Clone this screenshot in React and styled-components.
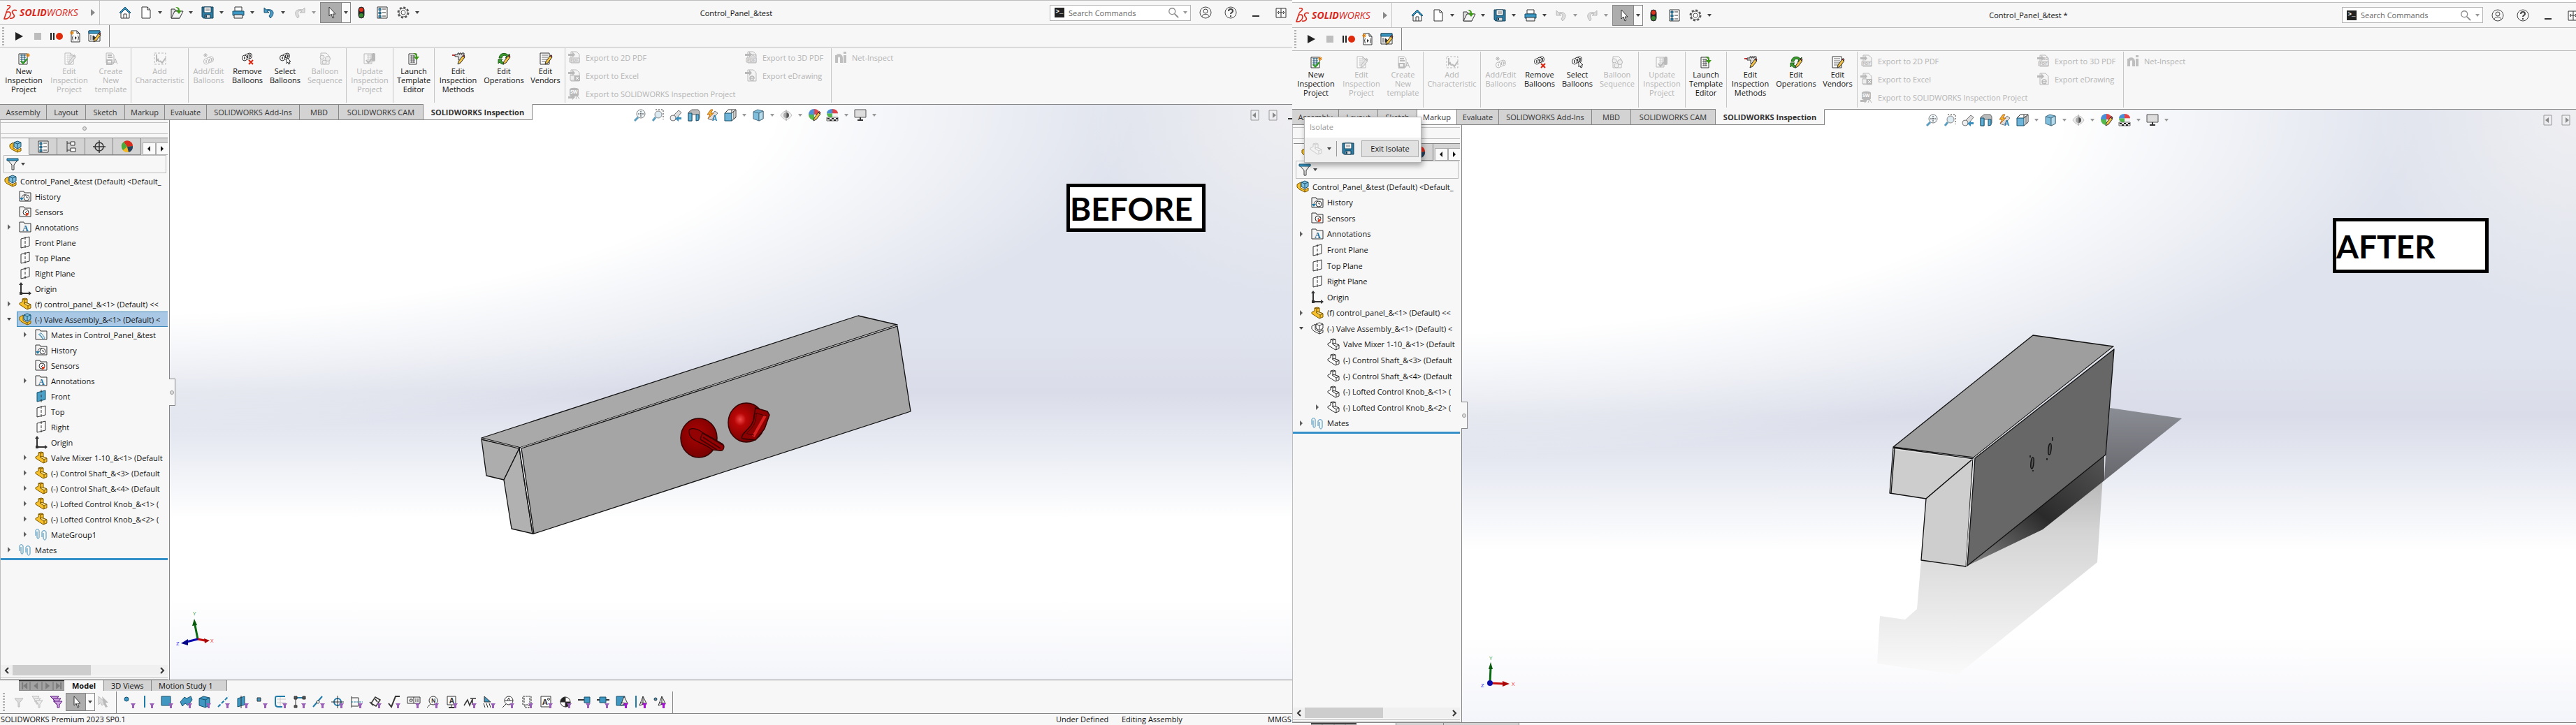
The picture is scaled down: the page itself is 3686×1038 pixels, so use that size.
import React from "react";
import styled, { createGlobalStyle, css } from "styled-components";

const INK = "#333";
const BLUE = "#1f7aa8";
const MIST = "#b9b9b9";

const GlobalStyle = createGlobalStyle`
  *, *::before, *::after { box-sizing: border-box; }
  body { margin: 0; background: #fff; overflow: hidden; }
  body, button, input { font: 11px/13px "Open Sans", "Noto Sans", sans-serif; color: #111; }
  button { background: none; border: 0; padding: 0; margin: 0; }
  svg { display: block; flex: none; overflow: visible; }
`;

/* ---------- icons ---------- */

const Svg = ({ children, size = 18, box = "0 0 18 18" }) => (
  <svg width={size} height={size} viewBox={box} fill="none" stroke={INK} aria-hidden="true">{children}</svg>
);

const page = (stroke = INK) => <path d="M3 1h8l4 4v12H3zM11 1v4h4" fill="#fff" stroke={stroke} />;
const pencil = (c = INK, f = "#f5c242") => (
  <g stroke={c}>
    <path d="M8 17l1-4 6-8 3 2-6 8z" fill={f} />
    <path d="M15 5l1-1.500 2 1.500-1 2z" fill={c === INK ? "#d33" : "#ccc"} />
  </g>
);
const gridLines = (c = INK) => <path d="M5 4h8M5 7h8M5 10h8M5 13h8M7 3v12M10 3v12" stroke={c} strokeWidth="1" />;
const balls = (c, y = 0) => (
  <g stroke={c} fill="#fff">
    <ellipse cx="12" cy={5 + y} rx="3.500" ry="4" />
    <ellipse cx="9" cy={6 + y} rx="3.500" ry="4" />
    <ellipse cx="5" cy={8 + y} rx="3.500" ry="4" />
    <path d={`M5 ${6 + y}v4M9.500 ${4 + y}v4M13 ${3 + y}v4`} strokeWidth="1.500" />
  </g>
);
const star = (x, y, c = "#e07b00") => (
  <path d={`M${x - 3} ${y}h6M${x} ${y - 3}v6M${x - 2} ${y - 2}l4 4M${x + 2} ${y - 2}l-4 4`} stroke={c} />
);
const arrowCursor = (fill = "#fff", stroke = INK) => (
  <path d="M6 1v13l3-3 2 6 2-1-2-5h4z" fill={fill} stroke={stroke} />
);
const part = (fill, stroke, top) => (
  <g stroke={stroke} strokeLinejoin="round">
    <path d="M1 8l4-2V2l4-1 3 1v6l5 2v5l-5 2-8-5-3-2z" fill={fill} />
    <path d="M8 7l4 1 5 2-4 2-5-3z" fill={top} />
    <path d="M5 2l3 1 4-1M8 3v6M13 12v5" />
  </g>
);
const assembly = (fill, stroke, cube, cubeStroke) => (
  <g stroke={stroke} strokeLinejoin="round">
    <path d="M1 6l5-3v8l6 3 5-3v4l-5 2-8-4-3-3z" fill={fill} />
    <path d="M12 14v3" />
    <g stroke={cubeStroke}>
      <path d="M7 3l5-2 5 2v6l-5 3-5-3z" fill={cube} />
      <path d="M7 3l5 2 5-2M12 5v7" />
    </g>
  </g>
);
const folder = <path d="M1 16V2h6l1 2h9v12z" fill="#f4f4f4" stroke={INK} />;
const clips = (
  <g stroke="#3d8db8">
    <path d="M1 11V4c0-3 5-3 5 0v9c0 3-3 3-3 0V5" />
    <path d="M10 13V6c0-3 6-3 6 0v8c0 4-4 4-4 0V7" />
  </g>
);
const ballQuads = (
  <g stroke="none">
    <circle cx="9" cy="8" r="8" fill="#ddd" />
    <path d="M9 8V0a8 8 0 0 1 8 8z" fill="#e0454a" />
    <path d="M9 8V0a8 8 0 0 0-8 8z" fill="#4b8fd8" />
    <path d="M9 8H1a8 8 0 0 0 8 8z" fill="#53b94a" />
    <path d="M9 8h8a8 8 0 0 1-8 8z" fill="#f3f3f3" />
  </g>
);
const exportPage = (
  <g stroke={MIST}>
    <path d="M4 1h8l4 4v12H4z" fill="#f4f4f4" />
    <path d="M0 4h6V1l4 4.500-4 4V7H0z" fill={MIST} stroke="none" />
  </g>
);
const tiny = (s, x, y, fill, size = 7, family = "Open Sans") => (
  <text x={x} y={y} fill={fill} stroke="none" fontSize={size} fontWeight="700" fontFamily={`"${family}", sans-serif`}>{s}</text>
);

const ICONS = {
  home: <><path d="M3 9v8h12V9L9 3z" fill="#fff" /><path d="M1 9l8-8 8 8-2 1-6-6-6 6z" fill="#3b97c4" stroke="#17506d" /><path d="M7 17v-6h4v6" /></>,
  file: page(),
  open: <><path d="M1 17V4h5l1 2h6v11z" fill="#ddd" /><path d="M1 17l5-10h12l-5 10z" fill="#f3f3f3" /><path d="M7 1c5 0 6 2 6 5h3l-4 5-4-5h3c0-2-1-3-4-5z" fill="#3c9b14" stroke="none" /></>,
  save: <><path d="M1 1h16v16H3l-2-2z" fill="#2c7da5" stroke="#123f57" /><path d="M4 1h10v8H4z" fill="#fff" stroke="#123f57" /><path d="M6 4h6M6 6h6" stroke="#777" /><path d="M5 12h8v5H5z" fill="#ddd" stroke="#123f57" /><path d="M7 13v3" stroke="#123f57" strokeWidth="2" /></>,
  print: <><path d="M4 1h10v6H4z" fill="#fff" /><path d="M1 7h16v6H1z" fill="#3b97c4" stroke="#17506d" /><path d="M3 12h12v5H3z" fill="#eee" /></>,
  undo: <path d="M2 2v7h7L6 7c4-2 7 1 3 7l2 3c8-8 3-14-6-12z" fill="#4b9cc8" stroke="#17506d" />,
  undoOff: <path d="M2 2v7h7L6 7c4-2 7 1 3 7l2 3c8-8 3-14-6-12z" fill="#ddd" stroke={MIST} />,
  redo: <path d="M16 2v7H9l3-2c-4-2-8 1-4 7l-2 3c-7-8-2-14 7-12z" fill="#ddd" stroke={MIST} />,
  cursor: arrowCursor(),
  light: <><rect x="5" y="1" width="8" height="16" rx="4" fill="#222" /><circle cx="9" cy="5" r="3" fill="#e0311c" stroke="none" /><circle cx="9" cy="13" r="3" fill="#3a8a34" stroke="none" /></>,
  list: <><path d="M2 1h14v16H2z" fill="#fff" /><path d="M4 3h3v3H4zM4 8h3v3H4zM4 13h3v3H4z" fill="#3b97c4" stroke="#17506d" /><path d="M9 4h5M9 9h5M9 14h5" /></>,
  gear: <><circle cx="9" cy="9" r="7" stroke="#555" strokeWidth="3" strokeDasharray="3 2.500" /><circle cx="9" cy="9" r="6" fill="#f4f4f4" stroke="#666" /><circle cx="9" cy="9" r="3" fill="#fff" stroke="#555" /></>,
  play: <path d="M4 3l11 6-11 6z" fill="#222" stroke="none" />,
  stop: <path d="M4 4h10v10H4z" fill="#bdbdbd" stroke="none" />,
  record: <><path d="M1 4v10M5 4v10" stroke="#222" strokeWidth="2" /><circle cx="13" cy="9" r="5" fill="#e02a0c" stroke="none" /></>,
  macro: <>{page()}<path d="M6 8c-2 0 0 3-2 3 2 0 0 4 2 4M12 8c2 0 0 3 2 3-2 0 0 4-2 4" /><path d="M8 9l3 2-3 3z" fill={INK} stroke="none" />{star(4, 4)}</>,
  macroEdit: <><path d="M1 1h16v15H1z" fill="#fff" /><path d="M1 1h16v4H1z" fill="#3b97c4" stroke="#17506d" /><path d="M4 7v7M7 8l4 3-4 3z" fill={INK} />{pencil()}</>,
  newProject: <><path d="M2 2h12v15H2z" fill="#fff" /><path d="M4 4h8M4 7h8M4 10h8M4 13h8M6 3v12M10 3v12" stroke="#17506d" /><path d="M5 12l3 4 6-7" stroke="#2c9a1c" strokeWidth="2" />{star(15, 4)}</>,
  editProject: <>{page(MIST)}{gridLines("#d0d0d0")}{pencil(MIST, "#e4e4e4")}</>,
  createTemplate: <><path d="M2 1h8l3 3v11H2z" stroke={MIST} /><path d="M4 4h6M4 7h7M3 11h7v6H3z" stroke={MIST} strokeWidth="2" /><path d="M12 17l3-8 3 8M13 14h4" stroke={MIST} /></>,
  addChar: <><rect x="1" y="1" width="16" height="16" stroke={MIST} strokeDasharray="3 2" /><path d="M4 3v9l2-2 2 4M9 12l3 3 5-7" stroke={MIST} strokeWidth="2" /></>,
  addBalloon: <>{balls(MIST, 5)}{star(4, 4, MIST)}</>,
  removeBalloon: <>{balls(INK)}<path d="M11 11l6 6M17 11l-6 6" stroke="#d9220c" strokeWidth="2" /></>,
  selectBalloon: <>{balls(INK)}<path d="M11 7v9l2-2 1 3 2-1-1-3h2z" fill="#fff" /></>,
  sequence: <><path d="M3 1h8l4 4v12H3z" stroke={MIST} /><circle cx="5" cy="7" r="3" fill="#eee" stroke={MIST} /><circle cx="13" cy="9" r="3.500" fill="#eee" stroke={MIST} /><circle cx="8" cy="14" r="3" fill="#eee" stroke={MIST} /></>,
  update: <><path d="M1 2h11v14H1z" stroke={MIST} />{gridLines("#cdcdcd")}<path d="M4 11l3 4 5-6" stroke={MIST} strokeWidth="2" /><rect x="12" y="1" width="5" height="12" rx="2" fill={MIST} stroke="none" /></>,
  template: <><path d="M2 2h11v15H2z" fill="#fff" /><path d="M4 5h7M4 8h7M4 11h7M4 14h7M6 4v11M9 4v11" stroke="#555" /><path d="M8 1c5 0 6 2 6 5h3l-4 5-4-5h3c0-2-1-3-4-5z" fill="#3c9b14" stroke="none" /></>,
  methods: <><path d="M0 4h5" stroke="#c33" strokeWidth="2" /><path d="M4 3h4V1h2v2h1V1h2v2h1V1h3v7l-3 3H9V6H4z" fill="#ddd" />{pencil()}</>,
  operations: <><path d="M2 8c1-8 10-8 13-4l2-2v6h-6l2-2c-3-3-6-2-7 2z" fill="#3c9b30" stroke="#1c5c14" /><path d="M1 10h6l-2 2 4 3v2c-3 0-5-1-6-3l-2 2z" fill="#3c9b30" stroke="#1c5c14" />{pencil()}</>,
  vendors: <><path d="M1 1h13v16H1z" fill="#fff" /><path d="M3 4h9M3 7h9M3 10h9M3 13h6" stroke="#666" />{pencil()}</>,
  pdf2: <>{exportPage}<path d="M2 10h14v6H2z" fill="#eee" stroke={MIST} />{tiny("PDF", 3, 15, MIST, 6)}</>,
  pdf3: <>{exportPage}{tiny("3D", 8, 8, MIST, 6)}<path d="M2 10h14v6H2z" fill="#eee" stroke={MIST} />{tiny("PDF", 3, 15, MIST, 6)}</>,
  excel: <>{exportPage}<path d="M3 9h6v7H3z" fill="#eee" stroke={MIST} /><path d="M9 9h8v8H9z" fill={MIST} stroke="none" /><path d="M11 11l4 4M15 11l-4 4" stroke="#fff" /></>,
  edrawing: <>{exportPage}<path d="M7 13h6c0-4-6-4-6 0s4 3 6 2" stroke={MIST} strokeWidth="1.500" /></>,
  swProject: <><path d="M2 3c0-3 13-3 13 0v8c0 3-13 3-13 0z" fill={MIST} stroke="none" /><path d="M0 13h6v-2l4 3-4 4v-2H0z" fill={MIST} stroke="none" /><path d="M11 17l2-5 3 5" stroke={MIST} />{tiny("SW", 3, 9, "#fff", 7)}</>,
  ni: <path d="M3 17V6M3 10c0-5 7-5 7 0v7M15 6v11M15 1v3" stroke="#bfbfbf" strokeWidth="4" />,
  person: <><circle cx="9" cy="9" r="8" stroke="#444" /><circle cx="9" cy="7" r="3" stroke="#444" /><path d="M4 15c0-5 10-5 10 0" stroke="#444" /></>,
  help: <><circle cx="9" cy="9" r="8" stroke="#444" /><path d="M6 7c0-4 6-4 6 0 0 2-3 2-3 4" stroke="#444" strokeWidth="2" /><path d="M9 13v2" stroke="#444" strokeWidth="2" /></>,
  minimise: <path d="M4 14h10" stroke="#333" strokeWidth="2" />,
  restore: <path d="M2 3h14v13H2zM9 3v13M4 9h10M6 7L4 9l2 2M12 7l2 2-2 2" stroke="#333" />,
  search: <><circle cx="7" cy="7" r="5" stroke="#888" strokeWidth="1.500" /><path d="M11 11l6 6" stroke="#888" strokeWidth="2" /></>,
  zoomFit: <><circle cx="11" cy="7" r="6" fill="#eef6fa" stroke="#777" /><path d="M11 3v8M7 7h8" strokeDasharray="2 1" /><path d="M7 12l-5 5" stroke="#5d9ec0" strokeWidth="3" /></>,
  zoomArea: <><circle cx="10" cy="8" r="5" fill="#dceaf2" stroke="#888" /><path d="M6 1h11v14" strokeDasharray="2 2" /><path d="M6 12l-4 5" stroke="#5d9ec0" strokeWidth="3" /></>,
  prevView: <><path d="M2 13L13 2l4 3L8 16z" fill="#ddd" stroke="#777" /><circle cx="5" cy="13" r="4" fill="#eee" stroke="#777" /><path d="M17 12h-4v-2l-5 4 5 4v-3h4z" fill="#3b8fbd" stroke="none" /></>,
  section: <><path d="M1 5l5-4h9l2 3v9l-4 4V8H6v9H1z" fill="#bbb" stroke="#666" /><path d="M1 6h5v11H1zM12 8h4v8l-4 1z" fill="#5fb0d6" stroke="#17506d" /></>,
  dynView: <><path d="M3 14L13 3l4 3-9 10z" fill="#ddd" stroke="#777" /><path d="M7 1L2 8h4l-3 6 8-8H7l3-5z" fill="#f5b629" stroke="#b5651d" />{tiny("A", 9, 17, "#2b7cab", 10)}</>,
  orient: <><path d="M1 6h10v11H1z" fill="#6db4d8" stroke="#17506d" /><path d="M1 6l5-5h11v11l-6 5M11 6l6-5M11 1v5M14 3v11" /></>,
  display: <><path d="M2 4l6-3 8 2v11l-6 3-8-3z" fill="#7fbedd" stroke="#4b6f82" /><path d="M2 4l8 2 6-3M10 6v11" stroke="#4b6f82" /><path d="M10 6l6-3v11l-6 3z" fill="#b7dcec" stroke="#4b6f82" /></>,
  eye: <><path d="M1 9c5-8 11-8 16 0-5 8-11 8-16 0z" fill="#eee" stroke="#bbb" /><path d="M9 5a4 4 0 0 1 0 8z" fill="#555" stroke="none" /><path d="M9 5a4 4 0 0 0 0 8z" fill="#aaa" stroke="none" /><path d="M9 1v16" stroke="#999" /></>,
  appearance: <>{ballQuads}{pencil()}</>,
  scene: <><g transform="scale(1 .8)">{ballQuads}</g><path d="M1 12h16v5H1z" fill="#fff" stroke="#666" /><path d="M2 13h3v2H2zM8 13h3v2H8zM14 13h3v2h-3zM5 15h3v2H5zM11 15h3v2h-3z" fill="#222" stroke="none" /></>,
  monitor: <><path d="M1 1h16v11H1z" fill="#ddd" stroke="#555" /><path d="M9 12v4M5 16h8" strokeWidth="2" /></>,
  dockLeft: <><path d="M3 2h11v14H3z" stroke="#999" /><path d="M10 5v8L5 9z" fill="#888" stroke="none" /></>,
  dockRight: <><path d="M3 2h11v14H3z" stroke="#999" /><path d="M8 5v8l5-4z" fill="#888" stroke="none" /></>,
  asm: assembly("#f6c12c", "#7a5600", "#7fbedd", "#17506d"),
  asmOff: assembly("#fff", INK, "#fff", INK),
  part: part("#f6c12c", "#7a5600", "#fbe08a"),
  partOff: part("#fff", INK, "#f7f7f7"),
  partGhost: part("#f2f2f2", "#ccc", "#f7f7f7"),
  config: <path d="M3 1v16M3 4h5M3 14h5M8 2h6v5H8zM8 11h7v5H8z" fill="#fff" />,
  target: <><circle cx="9" cy="9" r="6" strokeWidth="1.500" /><path d="M9 0v18M0 9h18" strokeWidth="1.500" /></>,
  ball: <g stroke="none"><circle cx="9" cy="9" r="8" fill="#f4b81c" /><path d="M9 9L4 2a8 8 0 0 1 13 6z" fill="#d92c1f" /><path d="M9 9L4 2a8 8 0 0 0-1 12z" fill="#4aa83c" /><path d="M9 9l8-1a8 8 0 0 1-6 9z" fill="#26415f" /></g>,
  filter: <><path d="M1 2h16l-6 8v7H8v-7z" fill="#eee" /><path d="M1 1h16v3H1z" fill="#3b97c4" stroke="#17506d" /></>,
  history: <>{folder}<circle cx="11" cy="11" r="4" fill="#fff" /><path d="M11 9v2h2M4 12c0-4 3-6 6-5" /><path d="M1 11h6l-3 4z" fill={BLUE} stroke="none" /></>,
  sensors: <>{folder}<circle cx="10" cy="10" r="4" fill="#fff" /><path d="M9 11l3-3" /><path d="M10 11h4a4 4 0 0 1-4 4z" fill="#e23b1a" stroke="none" /></>,
  notes: <>{folder}{tiny("A", 5, 15, "#226d99", 12, "Liberation Serif")}</>,
  matesIn: <>{folder}<path d="M5 8l6 7c2 1 4-1 2-3L9 7c-1-1-3 1-2 2l5 5" stroke="#3d8db8" /></>,
  plane: <path d="M3 4l12-3v13L3 17zM9 1v4M9 7v4M9 13v4" fill="#fafafa" />,
  planeOn: <><path d="M3 4l12-3v13L3 17z" fill="#4ba0c8" stroke="#17506d" /><path d="M9 0v4M9 7v4M9 13v5" /></>,
  origin: <><path d="M3 2v14h14" strokeWidth="2" /><path d="M0 4l3-4 3 4zM14 13l4 3-4 3zM1 14h4v4H1z" fill={INK} stroke="none" /></>,
  clips,
  funnelOff: <path d="M3 4h12l-5 6v6H8v-6z" fill="#ddd" stroke="#bbb" />,
  funnelsOff: <><path d="M1 1h10l-4 5v3H5V6z" fill="#eee" stroke="#bbb" /><path d="M3 4h10l-4 5v3H7V9z" fill="#eee" stroke="#bbb" /><path d="M6 7h10l-4 5v5h-2v-5z" fill="#eee" stroke="#bbb" /></>,
  funnels: <><path d="M0 1h12l-4 5v3H5V6z" fill="#cda0e0" stroke="#5d1a7e" /><path d="M3 4h12l-4 5v3H8V9z" fill="#cda0e0" stroke="#5d1a7e" /><path d="M5 8h12l-4 5v4h-3v-4z" fill="#cda0e0" stroke="#5d1a7e" /></>,
  cursorsOff: <><path d="M1 1v12l3-3 2 4 5-4z" fill="#ddd" stroke="#bbb" /><path d="M6 1l9 9h-4l3 6-3 1-3-6z" fill="#bbb" stroke="none" /></>,
};

const Icon = ({ name, size }) => <Svg size={size}>{ICONS[name]}</Svg>;

/* Small drawings of the selection filters, each carries a purple funnel. */
const FILTERS = [
  ["Vertices", <circle cx="5" cy="5" r="3" fill="#3b97c4" stroke="#17506d" />],
  ["Edges", <path d="M4 0v17" stroke={BLUE} strokeWidth="2" />],
  ["Faces", <path d="M1 1h13v13H1z" fill="#3f97c2" stroke="#17506d" />],
  ["Surface bodies", <path d="M1 9l6-7 3 2 6-3 2 5-6 8-4-3-4 4z" fill="#3f97c2" stroke="#17506d" />],
  ["Solid bodies", <><path d="M1 4l6-3 9 2v10l-6 4-9-3z" fill="#3f97c2" stroke="#17506d" /><path d="M1 4l9 2 6-3M10 6v11" stroke="#17506d" /></>],
  ["Axes", <path d="M1 16L16 1" stroke={BLUE} strokeWidth="2" strokeDasharray="5 2" />],
  ["Planes", <><path d="M2 4l10-3v12L2 16z" fill="#3f97c2" stroke="#17506d" /><path d="M7 0v18" /></>],
  ["Sketch points", <path d="M3 3h5v5H3z" fill="#3f97c2" />],
  ["Sketches", <><path d="M3 5h13M3 10h13M8 1v14" stroke="#ccc" /><path d="M15 1H5c-4 0-4 0-4 4v6c0 4 1 5 5 5h5" stroke={BLUE} strokeWidth="2" /></>],
  ["Sketch segments", <><path d="M3 16V3" /><path d="M3 3h12" stroke={BLUE} strokeWidth="2" /><path d="M1 1h4v4H1zM13 1h4v4h-4zM1 14h4v3H1z" fill="#555" /></>],
  ["Midpoints", <><path d="M1 16L14 1" stroke={BLUE} strokeWidth="2" /><circle cx="8" cy="9" r="2" fill="#fff" /></>],
  ["Center marks", <><circle cx="9" cy="9" r="5" stroke={BLUE} strokeWidth="2" /><path d="M9 0v18M0 9h18" /></>],
  ["Centerlines", <><path d="M2 1v16M2 3h10v12H2" /><path d="M1 9h17" stroke={BLUE} strokeDasharray="3 1" /></>],
  ["Dimensions", <path d="M3 11l6-9 7 4-6 9zM1 9l5 5M9 5l3 4" strokeWidth="1.500" />],
  ["Surface finish", <path d="M1 11l4 5L11 1h6" strokeWidth="2" />],
  ["Geometric tolerances", <><path d="M0 2h18v9H0zM9 2v9M3 8h4V5H4z" /><path d="M12 4v5M15 4v5" /></>],
  ["Notes", <><circle cx="10" cy="7" r="6" fill="#fff" />{tiny("N", 7, 10, INK, 8)}<path d="M6 12l-5 5" /></>],
  ["Datums", <><path d="M3 1h12v12H3zM9 13v3" />{tiny("A", 6, 11, INK, 10)}<path d="M5 17h8" strokeWidth="2" /></>],
  ["Weld symbols", <path d="M0 14l5-8 3 8 4-9v8M9 4h8" strokeWidth="1.500" />],
  ["Weld beads", <><path d="M2 1v8h9z" fill="#3f97c2" /><path d="M1 11l2 6M5 11l2 6M9 11l2 6" /></>],
  ["Datum targets", <><circle cx="10" cy="7" r="6" fill="#fff" /><path d="M4 7h12M6 12l-5 5M8 7l2-4 2 4" /></>],
  ["Cosmetic threads", <path d="M3 1h12v12H3zM5 3v8M13 3v8M6 13v4h6v-4" strokeDasharray="3 1" />],
  ["Blocks", <><path d="M1 1h14v15H1z" fill="#fff" />{tiny("A", 3, 13, INK, 11)}<circle cx="12" cy="5" r="1.500" /></>],
  ["Dowel pins", <><circle cx="9" cy="9" r="7" fill="#fff" /><path d="M9 9V2a7 7 0 0 0-7 7zM9 9v7a7 7 0 0 0 7-7z" fill="#222" /></>],
  ["Connection points", <><path d="M0 6h9" strokeWidth="2" /><path d="M9 2h8v8H9z" fill="#3f97c2" stroke="#17506d" /></>],
  ["Routing points", <><path d="M0 6h18" strokeWidth="2" /><path d="M4 2h9v8H4z" fill="#3f97c2" stroke="#17506d" /></>],
  ["Mesh faces", <><path d="M1 1h12v13H1z" fill="#3f97c2" stroke="#17506d" /><path d="M12 1l5 10-10 3zM8 10l8 1" fill="#eee" /></>, true],
  ["Mesh edges", <><path d="M2 0v17" stroke={BLUE} strokeWidth="2" /><path d="M12 1l5 10-10 3zM12 1v12M8 10l8 1" fill="#eee" /></>, true],
  ["Mesh vertices", <><circle cx="3" cy="5" r="2" fill="#3b97c4" /><path d="M12 1l5 10-10 3zM12 1v12M8 10l8 1" fill="#eee" /></>, true],
];

/* ---------- frame ---------- */

const Desktop = styled.main`
  display: grid;
  grid-template-columns: 1849fr 1837fr;
  height: 100vh;
  overflow: hidden;
`;
const AppWindow = styled.section`
  display: flex;
  flex-direction: column;
  min-width: 0;
  overflow: hidden;
  background: #f7f7f7;
  padding-top: ${(p) => (p.$roomy ? 3 : 0)}px;
  box-shadow: inset 0 3px #fff;
`;
const TitleBar = styled.header`
  display: flex;
  align-items: center;
  flex: none;
  height: ${(p) => (p.$roomy ? 37 : 36)}px;
  border-top: 1px solid #bdbdbd;
  border-bottom: 1px solid #bdbdbd;
  background: #f7f7f7;
`;
const Brand = styled.div`
  display: flex;
  align-items: center;
  gap: 3px;
  width: 143px;
  height: 100%;
  padding-left: 5px;
  border-right: 1px solid #c6c6c6;
`;
const BrandName = styled.span`
  flex: 1;
  color: #d9291c;
  font: italic 700 14px/20px "Open Sans", sans-serif;
  span { font-weight: 400; }
`;
const BrandArrow = styled.span`
  margin-right: 6px;
  border: solid transparent;
  border-width: 5px 0 5px 6px;
  border-left-color: #888;
`;
const Tools = styled.div`
  display: flex;
  align-items: center;
  padding-left: 27px;
`;
const ToolSlot = styled.button`
  display: flex;
  align-items: center;
  gap: 8px;
  width: ${(p) => p.$w}px;
  height: 24px;
`;
const Caret = styled.i`
  border: solid transparent;
  border-width: 4px 3px 0;
  border-top-color: ${(p) => (p.$soft ? "#999" : "#444")};
`;
const Picker = styled.div`
  display: flex;
  height: ${(p) => (p.$low ? 26 : 30)}px;
  margin-right: ${(p) => (p.$low ? 0 : 6)}px;
  border: 1px solid #868686;
`;
const PickerMain = styled.button`
  display: grid;
  place-items: center;
  width: ${(p) => (p.$low ? 28 : 30)}px;
  background: #adadad;
  border-right: 1px solid #868686;
`;
const PickerMore = styled.button`
  display: grid;
  place-items: center;
  width: 12px;
  background: #fafafa;
`;
const DocTitle = styled.h1`
  flex: 1;
  margin: 0;
  font: inherit;
  text-align: center;
  white-space: nowrap;
`;
const TitleEnd = styled.div`
  display: flex;
  align-items: center;
  flex: none;
  width: ${(p) => (p.$roomy ? 335 : 347)}px;
  overflow: hidden;
`;
const SearchBox = styled.label`
  display: flex;
  align-items: center;
  flex: none;
  gap: 6px;
  width: 202px;
  height: 23px;
  padding: 0 4px 0 6px;
  margin-right: 3px;
  background: #fff;
  border: 1px solid #b5b5b5;
`;
const Prompt = styled.span`
  width: 14px;
  height: 14px;
  background: #222;
  color: #fff;
  font: 700 9px/13px "Liberation Mono", monospace;
  text-align: center;
`;
const SearchInput = styled.input`
  flex: 1;
  min-width: 0;
  padding: 0;
  border: 0;
  outline: 0;
  background: none;
  &::placeholder { color: #666; opacity: 1; }
`;
const IconButton = styled.button`
  display: grid;
  place-items: center;
  flex: none;
  width: ${(p) => p.$w || 26}px;
  height: 24px;
`;

const MacroBar = styled.div`
  display: flex;
  flex: none;
  height: ${(p) => (p.$roomy ? 33 : 32)}px;
  border-bottom: 1px solid #bdbdbd;
`;
const MacroTools = styled.div`
  display: flex;
  align-items: center;
  width: 157px;
  padding-left: 3px;
  border-right: 1px solid #868686;
`;
const Grip = styled.span`
  width: 3px;
  height: 26px;
  margin-right: ${(p) => p.$gap}px;
  background: repeating-linear-gradient(#b0b0b0 0 2px, transparent 2px 4px);
`;

/* ---------- ribbon ---------- */

const Ribbon = styled.div`
  display: flex;
  flex: none;
  height: ${(p) => (p.$roomy ? 83 : 81)}px;
  padding: 1px 0 2px;
`;
const RibbonGroup = styled.div`
  display: flex;
  border-right: 1px solid #c6c6c6;
`;
const RibbonButton = styled.button`
  display: flex;
  flex-direction: column;
  align-items: center;
  gap: 2px;
  width: ${(p) => p.$w}px;
  padding-top: 6px;
  color: #111;
  white-space: pre-line;
  &:disabled { color: #b4b4b4; }
`;
const ExportGroup = styled.div`
  display: grid;
  grid-template-columns: 253px 127px;
  grid-template-rows: repeat(3, 26px);
  padding-left: 4px;
  width: 381px;
  border-right: 1px solid #c6c6c6;
`;
const ExportButton = styled.button`
  display: flex;
  align-items: center;
  align-self: start;
  gap: 7px;
  height: 26px;
  padding-left: ${(p) => p.$pad || 0}px;
  white-space: nowrap;
  &:disabled { color: #b4b4b4; }
`;

/* ---------- workspace ---------- */

const Workspace = styled.div`
  display: flex;
  flex-direction: column;
  flex: 1;
  min-height: 0;
  background:
    radial-gradient(ellipse 16% 34% at 100% 0, #efeff2 0, #efeff200 100%),
    radial-gradient(ellipse 78% 57% at 10% 0, #fff 0 64%, #ffffff00 100%),
    linear-gradient(#dfe3ed 0 40%, #dadde9 50%, #e9ecf3 60%, #fff 72% 86%, #f4f5fa 100%);
`;
const TabRow = styled.div`
  display: flex;
  flex: none;
  height: 23px;
`;
const CommandTab = styled.button`
  flex: none;
  width: ${(p) => p.$w}px;
  border: solid #868686;
  border-width: 1px 1px 1px 0;
  background: ${(p) => (p.$hot ? "#fff" : "#d3d3d3")};
  color: #333;
  white-space: nowrap;
  ${(p) => p.$active && css`
    background: #f7f7f7;
    border-top-color: #f7f7f7;
    font-weight: 700;
  `}
`;
const ViewBar = styled.div`
  display: flex;
  flex: 1;
  align-items: center;
  min-width: 0;
  padding: 8px 0 0 140px;
  border-top: 1px solid #868686;
`;
const ViewCaret = styled.button`
  display: grid;
  place-items: center;
  flex: none;
  width: 14px;
  height: 24px;
`;
const DockButtons = styled.div`
  display: flex;
  width: ${(p) => (p.$roomy ? 53 : 66)}px;
  margin-left: auto;
  overflow: hidden;
`;
const Split = styled.div`
  display: flex;
  flex: 1;
  min-height: 0;
`;
const SidePanel = styled.aside`
  position: relative;
  display: flex;
  flex-direction: column;
  flex: none;
  width: 243px;
  background: #f7f7f7;
  border: solid #868686;
  border-width: 0 1px 0 1px;
  border-left-color: #bdbdbd;
`;
const PanelHead = styled.div`
  display: grid;
  place-items: center;
  height: 17px;
  margin: 3px 2px ${(p) => (p.$roomy ? 6 : 5)}px 0;
  border: solid #c0c0c0;
  border-width: 1px 0;
`;
const Dot = styled.span`
  width: 6px;
  height: 6px;
  border: 1px solid #999;
  border-radius: 50%;
  background: #ddd;
`;
const PanelTabs = styled.div`
  display: flex;
  flex: none;
  height: 25px;
  margin: 0 2px 0 1px;
`;
const PanelTab = styled.button`
  display: grid;
  place-items: center;
  width: 40px;
  border: solid #868686;
  border-width: 1px 1px 1px 0;
  background: ${(p) => (p.$active ? "#f7f7f7" : "#d3d3d3")};
  border-bottom-color: ${(p) => (p.$active ? "#f7f7f7" : "#868686")};
`;
const TabScroll = styled.div`
  display: flex;
  align-items: flex-end;
  flex: 1;
  padding-left: 2px;
  border-top: 1px solid #868686;
  background: #d3d3d3;
`;
const ScrollStep = styled.button`
  display: grid;
  place-items: center;
  flex: 1;
  height: 18px;
  background: #fafafa;
  border: 1px solid #aaa;
  border-right-width: ${(p) => (p.$last ? 0 : 1)}px;
`;
const Tri = styled.i`
  border: solid transparent;
  border-width: ${(p) => (p.$left ? "4px 4px 4px 0" : "4px 0 4px 4px")};
  border-left-color: ${(p) => (p.$left ? "transparent" : p.$soft ? "#606060" : "#111")};
  border-right-color: ${(p) => (p.$left ? "#111" : "transparent")};
`;
const FilterBar = styled.button`
  display: flex;
  align-items: center;
  gap: 3px;
  flex: none;
  height: 26px;
  margin: 0 4px 0;
  padding-left: 3px;
  border: 1px solid #bdbdbd;
`;
const Tree = styled.ul`
  display: grid;
  grid-auto-rows: 1fr;
  flex: none;
  height: ${(p) => (p.$roomy ? 361 : 550)}px;
  margin: 0 2px 1px 0;
  padding: 0;
  list-style: none;
  overflow: hidden;
`;
const TreeItem = styled.li`
  display: flex;
  min-width: 0;
  padding-left: ${(p) => (p.$level === 2 ? 32 : p.$level === 1 ? 9 : 0)}px;
`;
const Toggle = styled.button`
  display: grid;
  place-items: center;
  flex: none;
  width: 5px;
  margin-right: 9px;
`;
const TreeLabel = styled.button`
  display: flex;
  align-items: center;
  flex: 1;
  gap: 5px;
  min-width: 0;
  padding-left: ${(p) => (p.$root ? 4 : 2)}px;
  border: 1px solid ${(p) => (p.$on ? "#3c88b8" : "transparent")};
  border-right: 0;
  background: ${(p) => (p.$on ? "#a9c8e5" : "none")};
  white-space: nowrap;
  text-align: left;
`;
const RollbackBar = styled.div`
  height: 3px;
  margin-right: 2px;
  background: #358fc9;
`;
const PanelScroll = styled.div`
  display: flex;
  align-items: center;
  justify-content: space-between;
  flex: none;
  height: 15px;
  margin: auto 2px 0 0;
  background: #f0f0f0;
`;
const PanelThumb = styled.span`
  width: 112px;
  height: 15px;
  margin-right: auto;
  background: #cdcdcd;
`;
const PanelFoot = styled.div`
  flex: none;
  height: 4px;
  margin: 2px 2px 0 0;
  border: solid #c0c0c0;
  border-width: 1px 0;
`;
const SplitHandle = styled.button`
  position: absolute;
  left: 241px;
  top: ${(p) => p.$top}px;
  z-index: 1;
  display: grid;
  place-items: center;
  width: 9px;
  height: 39px;
  background: #f7f7f7;
  border: 1px solid #868686;
  border-left: 0;
`;
const Canvas = styled.div`
  position: relative;
  flex: 1;
  min-width: 0;
  overflow: hidden;
`;
const Callout = styled.div`
  position: absolute;
  left: ${(p) => p.$x}px;
  top: ${(p) => p.$y}px;
  display: flex;
  align-items: center;
  width: ${(p) => p.$w}px;
  height: ${(p) => p.$h}px;
  padding-top: 3px;
  background: #fff;
  border: 5px solid #000;
  color: #000;
  font: 700 46px/56px Lato, sans-serif;
`;

/* ---------- footer ---------- */

const Footer = styled.footer`
  flex: none;
  height: ${(p) => (p.$clipped ? "4px" : "auto")};
  overflow: hidden;
  border-top: 1px solid #868686;
`;
const SheetTabs = styled.div`
  display: flex;
  height: 15px;
  padding-left: 27px;
`;
const SheetNav = styled.div`
  display: flex;
  width: 65px;
  background: #a2a2a2;
  border-top: 1px solid #222;
`;
const SheetStep = styled.button`
  flex: 1;
  border: 1px solid #888;
`;
const SheetTab = styled.button`
  width: ${(p) => p.$w}px;
  padding-left: ${(p) => (p.$active ? 0 : 10)}px;
  border-right: 1px solid #868686;
  background: ${(p) => (p.$active ? "#f7f7f7" : "#d3d3d3")};
  font-weight: ${(p) => (p.$active ? 700 : 400)};
  text-align: ${(p) => (p.$active ? "center" : "left")};
`;
const FilterTools = styled.div`
  display: flex;
  align-items: center;
  height: 33px;
  padding-left: 4px;
  border-bottom: 1px solid #868686;
`;
const FilterList = styled.div`
  display: grid;
  grid-template-columns: repeat(29, 1fr);
  align-items: center;
  width: 797px;
  height: 31px;
  margin-left: 4px;
  padding-left: 8px;
  border: solid #868686;
  border-width: 0 1px;
`;
const StatusBar = styled.div`
  display: flex;
  height: 16px;
  padding-left: 1px;
  line-height: 16px;
  white-space: nowrap;
`;
const StatusText = styled.span`
  width: ${(p) => p.$w}px;
  margin-left: ${(p) => (p.$push ? "auto" : 0)};
`;

/* ---------- isolate dialog ---------- */

const Dialog = styled.section`
  position: absolute;
  z-index: 2;
  left: 16px;
  top: -12px;
  width: 168px;
  height: 66px;
  background: #f0f0f0;
  border: 1px solid #b5b5b5;
  box-shadow: 2px 4px 8px #0005;
`;
const DialogTitle = styled.h2`
  height: 29px;
  margin: 0;
  padding-left: 7px;
  background: #fff;
  color: #999;
  font: 11px/27px "Open Sans", sans-serif;
`;
const DialogBody = styled.div`
  display: flex;
  align-items: center;
  height: 31px;
`;
const DialogTools = styled.div`
  display: flex;
  align-items: center;
  width: 80px;
  padding-left: 7px;
  gap: 7px;
`;
const Rule = styled.span`
  width: 1px;
  height: 22px;
  background: #999;
`;
const DialogButton = styled.button`
  width: 82px;
  height: 24px;
  margin-left: 1px;
  background: #e1e1e1;
  border: 1px solid #adadad;
`;

/* ---------- models ---------- */

const edge = { stroke: "#111", strokeWidth: 1.3, strokeLinejoin: "round" };

const Triad = ({ x, y, front }) => (
  <g transform={`translate(${x} ${y})`} strokeWidth="3" fontFamily="Open Sans, sans-serif" fontSize="8">
    <path d={front ? "M0 0L1 -22" : "M0 0L-4 -20"} stroke="#0a6b12" />
    <path d={front ? "M-2 -20L1 -30L4 -20z" : "M-8 -19L-5 -29L-1 -20z"} fill="#075a0c" />
    <path d={front ? "M0 0L20 1" : "M0 0L10 2"} stroke="#c40a0a" />
    <path d={front ? "M18 -3L28 1L18 5z" : "M9 -1L17 2L10 6z"} fill="#a80808" />
    {front ? <circle r="4" fill="#0c0ca8" /> : <><path d="M0 0L-16 4" stroke="#0a0ab0" /><path d="M-14 0L-24 6L-14 9z" fill="#06068a" /></>}
    <text x={front ? -1 : -7} y={front ? -33 : -34} fill="#2a9a3a">Y</text>
    <text x={front ? 31 : 18} y={front ? 4 : 5} fill="#e33">X</text>
    <text x={front ? -13 : -31} y={front ? 6 : 9} fill="#33e">Z</text>
  </g>
);

const PanelModel = () => (
  <svg width="100%" height="100%" role="img" aria-label="Control panel with two red knobs">
    <defs>
      <radialGradient id="knobA" cx="45%" cy="40%" r="60%">
        <stop offset="0" stopColor="#ac0404" /><stop offset="1" stopColor="#780000" />
      </radialGradient>
      <radialGradient id="knobB" cx="33%" cy="42%" r="65%">
        <stop offset="0" stopColor="#f04848" /><stop offset=".25" stopColor="#b80606" /><stop offset="1" stopColor="#6c0000" />
      </radialGradient>
    </defs>
    <g transform="translate(-243 -172)">
      <path d="M689 627L1228 452L1284 465L744 641z" fill="#a9a9a9" {...edge} />
      <path d="M689 629L743 642L721 687L696 681z" fill="#adadad" {...edge} />
      <path d="M743 642L721 687L732 757L762 764z" fill="#b1b1b1" {...edge} />
      <path d="M746 642L1284 467L1303 589L764 764z" fill="#a5a5a5" {...edge} />
      <path d="M689 629L744 641L1284 465M743 642L762 764L764 764" fill="none" {...edge} />
      <path d="M745 641L1283 466M690 628L742 641" stroke="#e6e6e6" strokeWidth=".8" />
      <ellipse cx="1000" cy="627" rx="26" ry="28" fill="url(#knobA)" stroke="#300" strokeWidth="1.500" />
      <path d="M986 618C985 612 996 612 1005 619L1033 635C1038 638 1036 647 1029 645L1019 644C1010 634 986 633 986 618z" fill="#930303" stroke="#300" strokeWidth="1.300" />
      <path d="M1002 629L1005 620L1034 637M1002 629L1026 644M1006 626L1031 642" fill="none" stroke="#400" strokeWidth="1.500" />
      <ellipse cx="1068" cy="605" rx="26" ry="28" fill="url(#knobB)" stroke="#300" strokeWidth="1.500" />
      <path d="M1081 584L1098 589L1101 594L1094 614L1081 630L1062 628C1058 620 1079 613 1079 596z" fill="#8c0202" stroke="#300" strokeWidth="1.500" />
      <path d="M1095 595L1078 625" stroke="#d92020" strokeWidth="4" />
      <path d="M1080 591L1098 596M1082 592C1083 612 1068 618 1069 621L1079 623" fill="none" stroke="#400" />
      <Triad x={283} y={915} />
    </g>
  </svg>
);

const IsolatedModel = () => (
  <svg width="100%" height="100%" role="img" aria-label="Control panel without knobs">
    <defs>
      <linearGradient id="mirror" x1="0" y1="0" x2="0" y2="1">
        <stop offset="0" stopColor="#aaa" /><stop offset=".35" stopColor="#d4d4d4" /><stop offset="1" stopColor="#fafafa" />
      </linearGradient>
      <linearGradient id="shade" x1="0" y1="0" x2="0" y2="1">
        <stop offset="0" stopColor="#8b8d94" /><stop offset="1" stopColor="#66676d" />
      </linearGradient>
      <linearGradient id="dark" x1="1" y1="0" x2="0" y2="1">
        <stop offset="0" stopColor="#555" /><stop offset=".5" stopColor="#2a2a2a" /><stop offset="1" stopColor="#888" />
      </linearGradient>
    </defs>
    <g transform="translate(-2092 -179)">
      <path d="M3011 650L3001 805L2801 966L2686 950L2690 882L2726 887L2743 872L2749 802L2815 810z" fill="url(#mirror)" />
      <path d="M3019 584L3122 599L3011 688L3013 650z" fill="url(#shade)" />
      <path d="M3011 651V688L2923 758L2815 810z" fill="url(#dark)" />
      <path d="M2709 640L2909 480L3024 496L2824 655z" fill="#9e9e9e" {...edge} />
      <path d="M2709 641L2823 657L2756 714L2704 706z" fill="#cdcdcd" {...edge} />
      <path d="M2823 657L2756 714L2749 802L2813 811z" fill="#cecece" {...edge} />
      <path d="M2826 656L3025 500L3013 651L2815 810z" fill="#676767" {...edge} />
      <path d="M2825 655L3024 497M2709 643L2824 658L2813 810" fill="none" stroke="#eee" strokeWidth=".8" />
      <path d="M2711 642L2706 706" {...edge} />
      <g fill="#555" stroke="#111" strokeWidth="1.500">
        <ellipse cx="2908" cy="663" rx="2" ry="8" transform="rotate(6 2908 663)" />
        <ellipse cx="2933" cy="643" rx="2" ry="8" transform="rotate(6 2933 643)" />
        <path d="M2905 652v3M2909 673v2M2937 626v5M2929 656v3" />
      </g>
      <Triad x={2132} y={978} front />
    </g>
  </svg>
);

/* ---------- data ---------- */

const RIBBON = [
  [["New\nInspection\nProject", "newProject", 68, true], ["Edit\nInspection\nProject", "editProject", 62], ["Create\nNew\ntemplate", "createTemplate", 57]],
  [["Add\nCharacteristic", "addChar", 81]],
  [["Add/Edit\nBalloons", "addBalloon", 57], ["Remove\nBalloons", "removeBalloon", 54, true], ["Select\nBalloons", "selectBalloon", 54, true], ["Balloon\nSequence", "sequence", 60]],
  [["Update\nInspection\nProject", "update", 66]],
  [["Launch\nTemplate\nEditor", "template", 58, true]],
  [["Edit\nInspection\nMethods", "methods", 67, true], ["Edit\nOperations", "operations", 64, true], ["Edit\nVendors", "vendors", 55, true]],
];
const EXPORTS = [
  ["Export to 2D PDF", "pdf2"], ["Export to 3D PDF", "pdf3"],
  ["Export to Excel", "excel"], ["Export eDrawing", "edrawing"],
  ["Export to SOLIDWORKS Inspection Project", "swProject"],
];
const TABS = [["Assembly", 67], ["Layout", 56], ["Sketch", 56], ["Markup", 57], ["Evaluate", 60], ["SOLIDWORKS Add-Ins", 133], ["MBD", 56], ["SOLIDWORKS CAM", 121], ["SOLIDWORKS Inspection", 156]];
const VIEW_TOOLS = [["Zoom to fit", "zoomFit"], ["Zoom to area", "zoomArea"], ["Previous view", "prevView"], ["Section view", "section"], ["Dynamic annotation views", "dynView"], ["View orientation", "orient", 1], ["Display style", "display", 1], ["Hide/show items", "eye", 1], ["Edit appearance", "appearance"], ["Apply scene", "scene", 1], ["View settings", "monitor", 1]];

/* [label, icon, level, arrow, selected] */
const TOP_NODES = [
  ["Control_Panel_&test (Default) <Default_", "asm", 0],
  ["History", "history", 1], ["Sensors", "sensors", 1], ["Annotations", "notes", 1, "right"],
  ["Front Plane", "plane", 1], ["Top Plane", "plane", 1], ["Right Plane", "plane", 1], ["Origin", "origin", 1],
  ["(f) control_panel_&<1> (Default) <<", "part", 1, "right"],
];
const BEFORE_TREE = [
  ...TOP_NODES,
  ["(-) Valve Assembly_&<1> (Default) <", "asm", 1, "down", true],
  ["Mates in Control_Panel_&test", "matesIn", 2, "right"],
  ["History", "history", 2], ["Sensors", "sensors", 2], ["Annotations", "notes", 2, "right"],
  ["Front", "planeOn", 2], ["Top", "plane", 2], ["Right", "plane", 2], ["Origin", "origin", 2],
  ["Valve Mixer 1-10_&<1> (Default", "part", 2, "right"],
  ["(-) Control Shaft_&<3> (Default", "part", 2, "right"],
  ["(-) Control Shaft_&<4> (Default", "part", 2, "right"],
  ["(-) Lofted Control Knob_&<1> (", "part", 2, "right"],
  ["(-) Lofted Control Knob_&<2> (", "part", 2, "right"],
  ["MateGroup1", "clips", 2, "right"],
  ["Mates", "clips", 1, "right"],
];
const AFTER_TREE = [
  ...TOP_NODES,
  ["(-) Valve Assembly_&<1> (Default) <", "asmOff", 1, "down"],
  ["Valve Mixer 1-10_&<1> (Default", "partOff", 2],
  ["(-) Control Shaft_&<3> (Default", "partOff", 2],
  ["(-) Control Shaft_&<4> (Default", "partOff", 2],
  ["(-) Lofted Control Knob_&<1> (", "partOff", 2],
  ["(-) Lofted Control Knob_&<2> (", "partOff", 2, "right"],
  ["Mates", "clips", 1, "right"],
];

/* ---------- composition ---------- */

const Slot = ({ label, icon, w, caret, soft }) => (
  <ToolSlot $w={w} aria-label={label}><Icon name={icon} />{caret && <Caret $soft={soft} />}</ToolSlot>
);

const TitleArea = ({ title, roomy }) => (
  <TitleBar $roomy={roomy}>
    <Brand>
      <svg width="20" height="22" viewBox="0 0 20 22" fill="none" stroke="#d9291c" strokeWidth="1.600" aria-hidden="true">
        <path d="M5 1c6-1 6 2 0 6M5 8L1 20c5 1 9-3 9-7 0-3-3-4-6-2M19 8c-6-2-8 2-5 5s1 7-5 6" />
      </svg>
      <BrandName>SOLID<span>WORKS</span></BrandName>
      <BrandArrow />
    </Brand>
    <Tools>
      <Slot label="Home" icon="home" w={30} />
      <Slot label="New" icon="file" w={44} caret />
      <Slot label="Open" icon="open" w={44} caret />
      <Slot label="Save" icon="save" w={44} caret />
      <Slot label="Print" icon="print" w={44} caret />
      <Slot label="Undo" icon={roomy ? "undoOff" : "undo"} w={44} caret soft={roomy} />
      <Slot label="Redo" icon="redo" w={38} caret soft />
      <Picker>
        <PickerMain aria-label="Select"><Icon name="cursor" /></PickerMain>
        <PickerMore aria-label="Select options"><Caret /></PickerMore>
      </Picker>
      <Slot label="Rebuild" icon="light" w={30} />
      <Slot label="File properties" icon="list" w={30} />
      <Slot label="Options" icon="gear" w={37} caret />
    </Tools>
    <DocTitle>{title}</DocTitle>
    <TitleEnd $roomy={roomy}>
      <SearchBox>
        <Prompt>&gt;_</Prompt>
        <SearchInput placeholder="Search Commands" aria-label="Search Commands" />
        <Icon name="search" size={16} /><Caret $soft />
      </SearchBox>
      {[["Login", "person"], ["Help", "help"], ["Minimise", "minimise"], ["Restore", "restore"]].map(([l, i]) => (
        <IconButton key={l} $w={36} aria-label={l}><Icon name={i} /></IconButton>
      ))}
    </TitleEnd>
  </TitleBar>
);

const MacroArea = ({ roomy }) => (
  <MacroBar $roomy={roomy}>
    <MacroTools>
      <Grip $gap={7} />
      {[["Run macro", "play"], ["Stop macro", "stop"], ["Record macro", "record"], ["New macro", "macro"], ["Edit macro", "macroEdit"]].map(([l, i]) => (
        <IconButton key={l} $w={27} aria-label={l}><Icon name={i} /></IconButton>
      ))}
    </MacroTools>
  </MacroBar>
);

const RibbonArea = ({ roomy }) => (
  <Ribbon $roomy={roomy}>
    {RIBBON.map((group, g) => (
      <RibbonGroup key={g}>
        {group.map(([label, icon, w, on]) => (
          <RibbonButton key={label} $w={w} disabled={!on}><Icon name={icon} />{label}</RibbonButton>
        ))}
      </RibbonGroup>
    ))}
    <ExportGroup>
      {EXPORTS.map(([label, icon]) => (
        <ExportButton key={label} disabled><Icon name={icon} />{label}</ExportButton>
      ))}
    </ExportGroup>
    <ExportButton $pad={4} disabled><Icon name="ni" />Net-Inspect</ExportButton>
  </Ribbon>
);

const TabArea = ({ roomy }) => (
  <TabRow>
    {TABS.map(([label, w], i) => (
      <CommandTab key={label} $w={w} $active={i === 8} $hot={roomy && i === 3}>{label}</CommandTab>
    ))}
    <ViewBar>
      {VIEW_TOOLS.map(([label, icon, more]) => (
        <React.Fragment key={label}>
          <IconButton aria-label={label}><Icon name={icon} /></IconButton>
          {more && <ViewCaret aria-label={`${label} options`}><Caret $soft /></ViewCaret>}
        </React.Fragment>
      ))}
      <DockButtons $roomy={roomy}>
        <IconButton aria-label="Dock left"><Icon name="dockLeft" /></IconButton>
        <IconButton aria-label="Dock right"><Icon name="dockRight" /></IconButton>
        <IconButton aria-label="Minimise document"><Icon name="minimise" /></IconButton>
      </DockButtons>
    </ViewBar>
  </TabRow>
);

const Isolate = () => (
  <Dialog aria-label="Isolate">
    <DialogTitle>Isolate</DialogTitle>
    <DialogBody>
      <DialogTools>
        <Icon name="partGhost" /><Caret /><Rule /><Icon name="save" />
      </DialogTools>
      <DialogButton>Exit Isolate</DialogButton>
    </DialogBody>
  </Dialog>
);

const FeaturePanel = ({ nodes, roomy }) => (
  <SidePanel>
    {roomy && <Isolate />}
    <PanelHead $roomy={roomy}><Dot /></PanelHead>
    <PanelTabs>
      {[["Feature tree", "asm"], ["Properties", "list"], ["Configurations", "config"], ["Dimensions", "target"], ["Appearances", "ball"]].map(([l, i], n) => (
        <PanelTab key={l} $active={n === 0} aria-label={l}><Icon name={i} /></PanelTab>
      ))}
      <TabScroll>
        <ScrollStep aria-label="Scroll tabs left"><Tri $left /></ScrollStep>
        <ScrollStep $last aria-label="Scroll tabs right"><Tri /></ScrollStep>
      </TabScroll>
    </PanelTabs>
    <FilterBar aria-label="Filter tree"><Icon name="filter" /><Caret /></FilterBar>
    <Tree $roomy={roomy}>
      {nodes.map(([label, icon, level, arrow, on], i) => (
        <TreeItem key={i} $level={level}>
          {level > 0 && (
            <Toggle aria-label={`Toggle ${label}`} disabled={!arrow}>
              {arrow === "right" && <Tri $soft />}
              {arrow === "down" && <Caret />}
            </Toggle>
          )}
          <TreeLabel $root={level === 0} $on={on}><Icon name={icon} />{label}</TreeLabel>
        </TreeItem>
      ))}
    </Tree>
    <RollbackBar />
    <PanelScroll>
      <IconButton $w={17} aria-label="Scroll left"><Svg size={10} box="0 0 10 10"><path d="M7 1L3 5l4 4" strokeWidth="2" /></Svg></IconButton>
      <PanelThumb />
      <IconButton $w={17} aria-label="Scroll right"><Svg size={10} box="0 0 10 10"><path d="M3 1l4 4-4 4" strokeWidth="2" /></Svg></IconButton>
    </PanelScroll>
    <PanelFoot />
    <SplitHandle $top={roomy ? 396 : 370} aria-label="Collapse panel"><Dot /></SplitHandle>
  </SidePanel>
);

const Sheets = () => (
  <SheetTabs>
    <SheetNav>
      {["First", "Previous", "Next", "Last"].map((l, i) => (
        <SheetStep key={l} aria-label={l}>
          <svg width="100%" height="12" viewBox="0 0 14 12" fill="#7c7c7c" aria-hidden="true">
            <path d={["M3 1h2v10H3zM11 1v10L5 6z", "M10 1v10L4 6z", "M4 1v10l6-5z", "M9 1h2v10H9zM3 1v10l6-5z"][i]} />
          </svg>
        </SheetStep>
      ))}
    </SheetNav>
    <SheetTab $w={57} $active>Model</SheetTab>
    <SheetTab $w={68}>3D Views</SheetTab>
    <SheetTab $w={108}>Motion Study 1</SheetTab>
  </SheetTabs>
);

const BottomTools = () => (
  <FilterTools>
    <Grip $gap={6} />
    {[["Toggle filters", "funnelOff"], ["Clear filters", "funnelsOff"], ["Select all filters", "funnels"]].map(([l, i]) => (
      <IconButton key={l} $w={27} aria-label={l}><Icon name={i} /></IconButton>
    ))}
    <Picker $low>
      <PickerMain $low aria-label="Select"><Icon name="cursor" /></PickerMain>
      <PickerMore aria-label="Select options"><Caret /></PickerMore>
    </Picker>
    <IconButton aria-label="Select over geometry"><Icon name="cursorsOff" /></IconButton>
    <FilterList>
      {FILTERS.map(([label, art, bright]) => (
        <IconButton key={label} $w={20} aria-label={`Filter ${label}`}>
          <Svg size={19} box="0 0 19 19">
            {art}
            <path d="M11 11h7l-2 3v4h-3v-4z" fill={bright ? "#a713d6" : "#9a5fb8"} stroke="none" />
          </Svg>
        </IconButton>
      ))}
    </FilterList>
  </FilterTools>
);

export default function App() {
  return (
    <>
      <GlobalStyle />
      <Desktop>
        <AppWindow>
          <TitleArea title="Control_Panel_&test" />
          <MacroArea />
          <RibbonArea />
          <Workspace>
            <TabArea />
            <Split>
              <FeaturePanel nodes={BEFORE_TREE} />
              <Canvas>
                <PanelModel />
                <Callout $x={1283} $y={91} $w={199} $h={69}>BEFORE</Callout>
              </Canvas>
            </Split>
          </Workspace>
          <Footer>
            <Sheets />
            <BottomTools />
            <StatusBar>
              <StatusText>SOLIDWORKS Premium 2023 SP0.1</StatusText>
              <StatusText $push $w={94}>Under Defined</StatusText>
              <StatusText $w={209}>Editing Assembly</StatusText>
              <StatusText $w={35}>MMGS</StatusText>
            </StatusBar>
          </Footer>
        </AppWindow>
        <AppWindow $roomy>
          <TitleArea title="Control_Panel_&test *" roomy />
          <MacroArea roomy />
          <RibbonArea roomy />
          <Workspace>
            <TabArea roomy />
            <Split>
              <FeaturePanel nodes={AFTER_TREE} roomy />
              <Canvas>
                <IsolatedModel />
                <Callout $x={1246} $y={133} $w={223} $h={79}>AFTER</Callout>
              </Canvas>
            </Split>
          </Workspace>
          <Footer $clipped><Sheets /></Footer>
        </AppWindow>
      </Desktop>
    </>
  );
}
